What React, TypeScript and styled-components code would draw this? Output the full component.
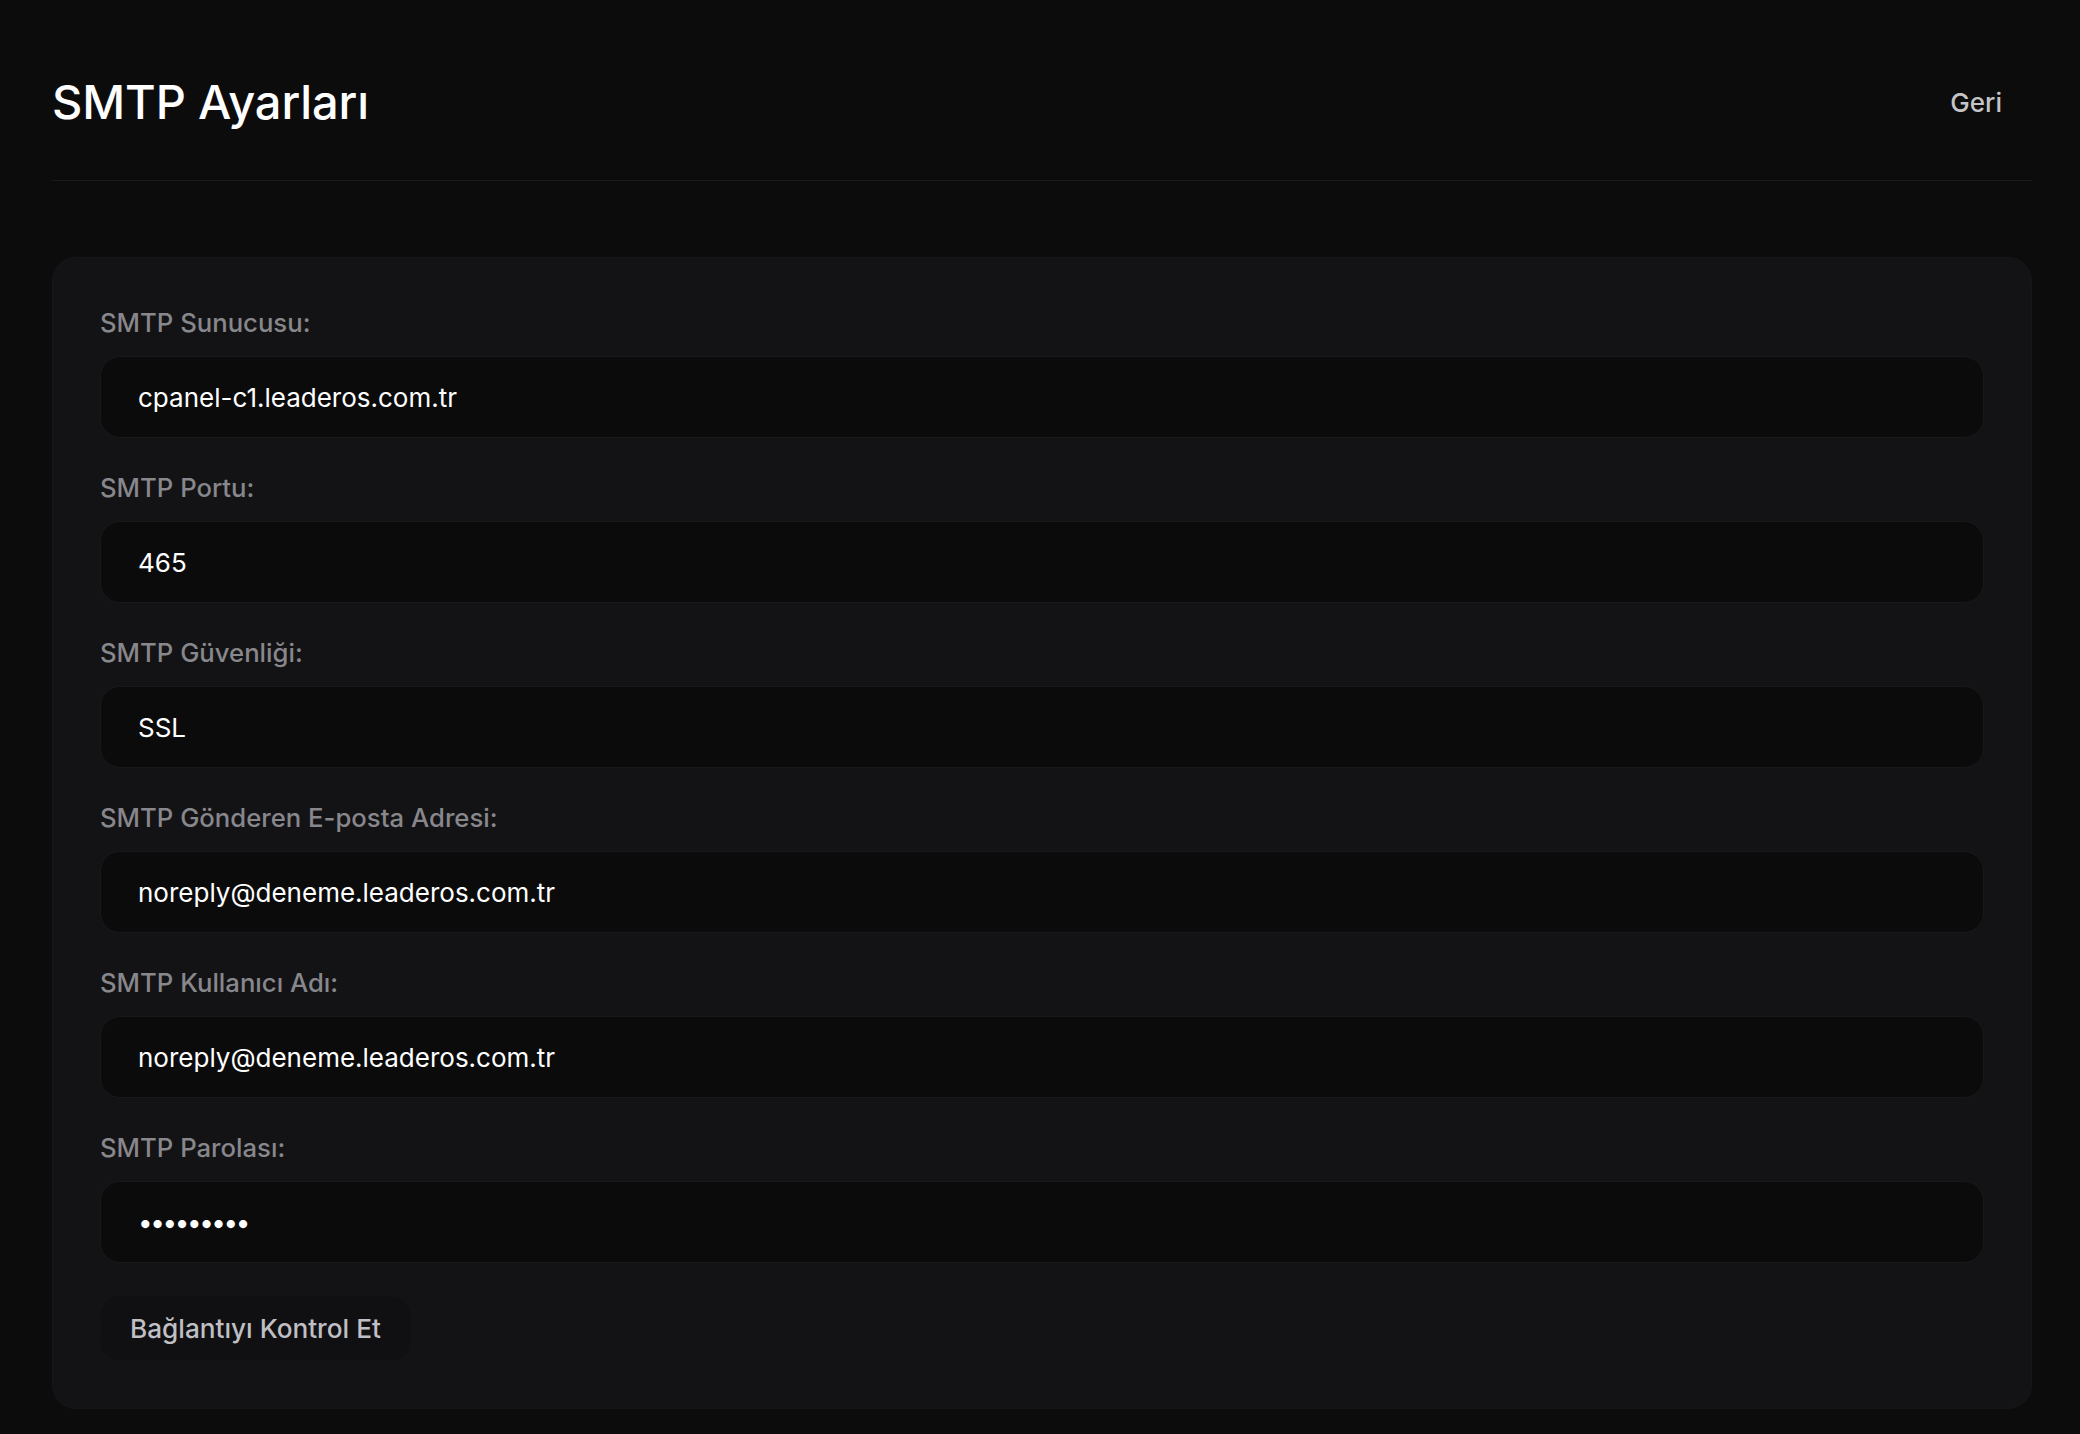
import { FC } from 'react';
import styled, { createGlobalStyle } from 'styled-components';

const GlobalStyle = createGlobalStyle`
    * {
        box-sizing: border-box;
    }
    html, body {
        margin: 0;
        padding: 0;
        background: #0c0c0d;
    }
    body {
        font-family: Inter, "Noto Sans", "Liberation Sans", sans-serif;
        color: #ffffff;
    }
`;

const Page = styled.div`
    min-height: 1434px;
    padding: 74px 48px 24px 52px;
    background: #0c0c0d;
`;

const Header = styled.header`
    display: flex;
    justify-content: space-between;
    align-items: center;
    padding-bottom: 50px;
    border-bottom: 1px solid #1a1a1c;
`;

const Title = styled.h1`
    margin: 0;
    font-size: 47px;
    line-height: 56px;
    font-weight: 500;
    letter-spacing: -0.1px;
    color: #ffffff;
`;

const BackButton = styled.button`
    height: 56px;
    padding: 0 30px;
    border: 0;
    border-radius: 16px;
    background: transparent;
    color: #c4c4c8;
    font-family: inherit;
    font-size: 26px;
    font-weight: 500;
    cursor: pointer;
`;

const Card = styled.section`
    margin-top: 76px;
    padding: 48px 47px 47px;
    background: #131315;
    border: 1px solid #161618;
    border-radius: 24px;
    display: flex;
    flex-direction: column;
    gap: 33px;
`;

const Field = styled.div`
    display: flex;
    flex-direction: column;
    gap: 16px;
`;

const Label = styled.label`
    font-size: 25.7px;
    line-height: 34px;
    font-weight: 500;
    color: #87878c;
`;

const Input = styled.input<{ $secret?: boolean }>`
    width: 100%;
    height: 82px;
    padding: 0 37px;
    background: #0b0b0c;
    border: 1px solid #19191b;
    border-radius: 20px;
    color: #ffffff;
    font-family: inherit;
    font-size: 26px;
    font-weight: 400;
    letter-spacing: ${p => (p.$secret ? '-2.4px' : '0')};
    outline: none;
`;

const CheckButton = styled.button`
    align-self: flex-start;
    height: 65px;
    padding: 0 29px;
    background: #101012;
    border: 1px solid #121214;
    border-radius: 20px;
    color: #bfbfc4;
    font-family: inherit;
    font-size: 26.2px;
    font-weight: 500;
    cursor: pointer;
`;

const fields = [
    { label: 'SMTP Sunucusu:', value: 'cpanel-c1.leaderos.com.tr', type: 'text' },
    { label: 'SMTP Portu:', value: '465', type: 'text' },
    { label: 'SMTP Güvenliği:', value: 'SSL', type: 'text' },
    { label: 'SMTP Gönderen E-posta Adresi:', value: 'noreply@deneme.leaderos.com.tr', type: 'text' },
    { label: 'SMTP Kullanıcı Adı:', value: 'noreply@deneme.leaderos.com.tr', type: 'text' },
    { label: 'SMTP Parolası:', value: 'secret123', type: 'password' },
];

const App: FC = () => {
    return (
        <>
            <GlobalStyle />
            <Page>
                <Header>
                    <Title>SMTP Ayarları</Title>
                    <BackButton>Geri</BackButton>
                </Header>
                <Card>
                    {fields.map((f, i) => (
                        <Field key={i}>
                            <Label htmlFor={'f' + i}>{f.label}</Label>
                            <Input
                                id={'f' + i}
                                type={f.type}
                                defaultValue={f.value}
                                $secret={f.type === 'password'}
                            />
                        </Field>
                    ))}
                    <CheckButton>Bağlantıyı Kontrol Et</CheckButton>
                </Card>
            </Page>
        </>
    );
};

export default App;
